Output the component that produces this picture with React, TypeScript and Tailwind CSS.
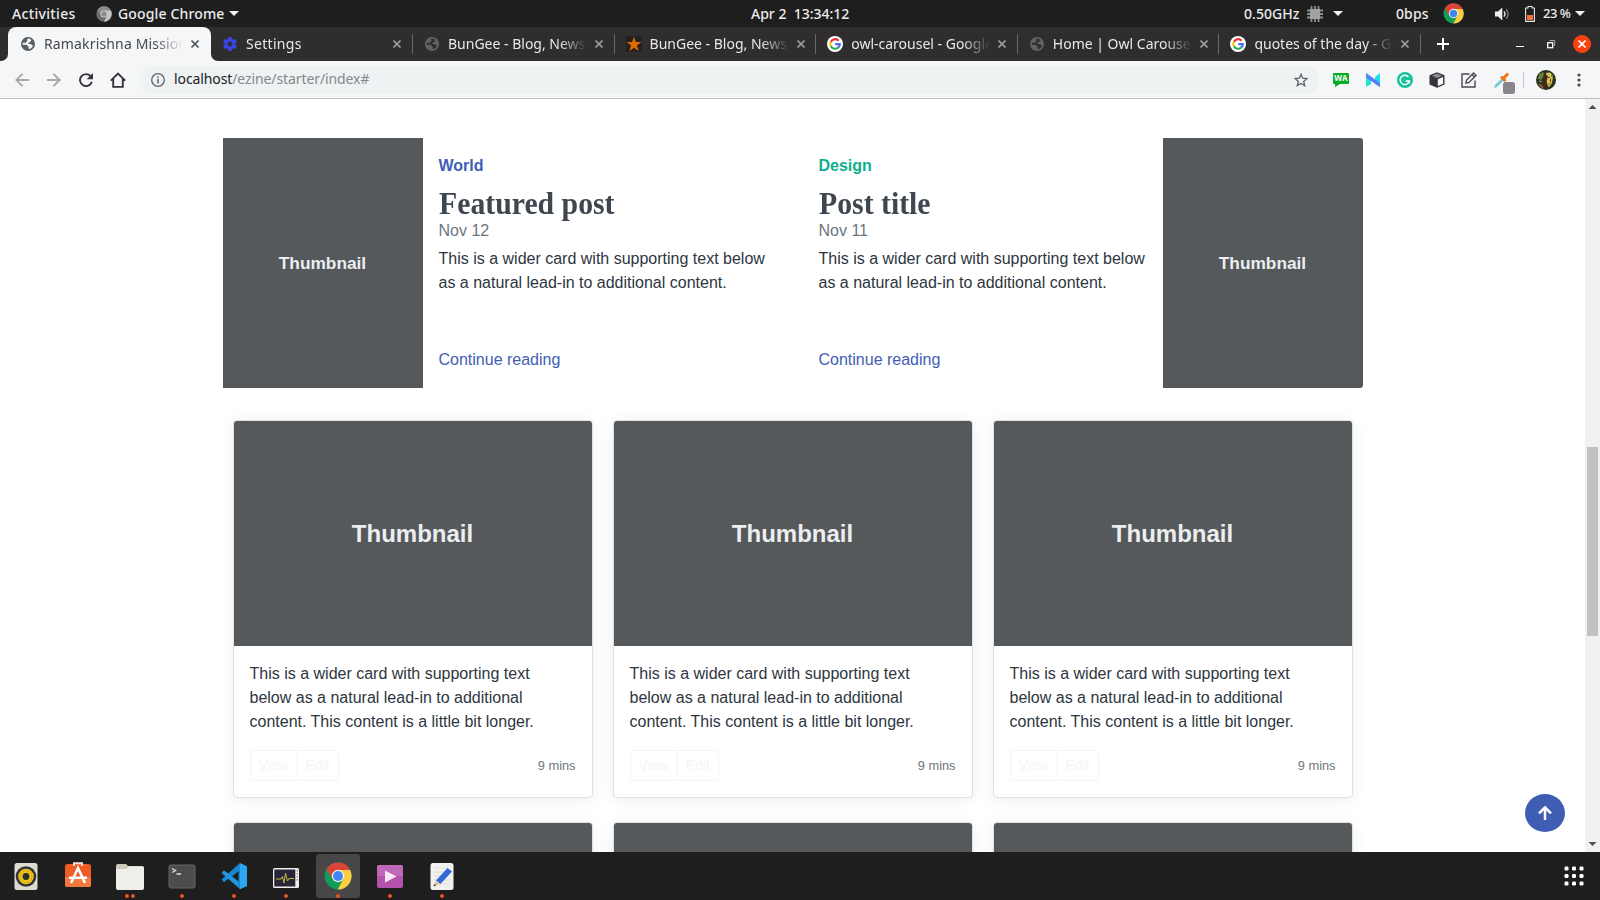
import React from "react";

const UI = "font-['Noto_Sans',sans-serif]";

function Chrome({ size, mono = false }: { size: number; mono?: boolean }) {
  const [r, g, y, b, w] = mono
    ? ["#8a8a8a", "#6c6c6c", "#c4c4c4", "#8c8c8c", "#d8d8d8"]
    : ["#db4437", "#0f9d58", "#ffcd40", "#4285f4", "#f1f1f1"];
  return (
    <svg width={size} height={size} viewBox="0 0 48 48" className="shrink-0">
      <circle cx="24" cy="24" r="23" fill={g} />
      <path d="M24 24 L4.1 12.5 A23 23 0 0 1 44.8 13.5 L24 13.5 Z" fill={r} />
      <path d="M4.1 12.5 L14.8 29.3 L24 24 L24 13.5 Z" fill={r} />
      <path d="M24 13.5 H44.8 A23 23 0 0 1 23.5 47 L33.2 29.3 Z" fill={y} />
      <circle cx="24" cy="24" r="10.6" fill={w} />
      <circle cx="24" cy="24" r="8.4" fill={b} />
    </svg>
  );
}

function Globe({ color, land }: { color: string; land: string }) {
  return (
    <svg width="14" height="14" viewBox="0 0 14 14" className="shrink-0">
      <circle cx="7" cy="7" r="7" fill={color} />
      <path d="M7.8 1.6 C5.8 2 5.6 3.2 6.6 3.9 C5.2 4.2 5.6 5.4 4.6 5.8 H1.8 C1.6 6.6 1.6 7.2 1.8 7.8 H5.2 C6.6 7.8 6.3 9.3 7.6 9.4 V11.9 C9.6 12 11.6 10.4 12 8.5 C10.8 8.7 10.6 7.2 9.2 7 H7 C6.8 5.6 8.6 5.9 8.9 5 C9.2 4 10.4 4.3 10.3 3 C9.6 2.2 8.7 1.8 7.8 1.6Z" fill={land} />
    </svg>
  );
}

function GoogleG() {
  return (
    <svg width="16" height="16" viewBox="0 0 16 16" className="shrink-0">
      <circle cx="8" cy="8" r="8" fill="#fff" />
      <g fill="none" strokeWidth="2.1">
        <path d="M11.6 4.7 A4.7 4.7 0 0 0 3.9 5.8" stroke="#ea2b2b" />
        <path d="M3.9 5.8 A4.7 4.7 0 0 0 3.9 10.3" stroke="#fbbc05" />
        <path d="M3.9 10.3 A4.7 4.7 0 0 0 11.2 11.5" stroke="#20b04b" />
        <path d="M11.2 11.5 A4.7 4.7 0 0 0 12.8 8.1 H8.2" stroke="#4472f2" />
      </g>
    </svg>
  );
}

function Gear() {
  return (
    <svg width="14" height="14" viewBox="2 2 20 20" className="shrink-0">
      <path fill="#3c46e6" d="M19.43 12.98c.04-.32.07-.64.07-.98s-.03-.66-.07-.98l2.11-1.65c.19-.15.24-.42.12-.64l-2-3.46c-.12-.22-.39-.3-.61-.22l-2.49 1c-.52-.4-1.08-.73-1.69-.98l-.38-2.65C14.46 2.18 14.25 2 14 2h-4c-.25 0-.46.18-.49.42l-.38 2.65c-.61.25-1.17.59-1.69.98l-2.49-1c-.23-.09-.49 0-.61.22l-2 3.46c-.13.22-.07.49.12.64l2.11 1.65c-.04.32-.07.65-.07.98s.03.66.07.98l-2.11 1.65c-.19.15-.24.42-.12.64l2 3.46c.12.22.39.3.61.22l2.49-1c.52.4 1.08.73 1.69.98l.38 2.65c.03.24.24.42.49.42h4c.25 0 .46-.18.49-.42l.38-2.65c.61-.25 1.17-.59 1.69-.98l2.49 1c.23.09.49 0 .61-.22l2-3.46c.12-.22.07-.49-.12-.64l-2.11-1.65zM12 15.5c-1.93 0-3.5-1.57-3.5-3.5s1.57-3.5 3.5-3.5 3.5 1.57 3.5 3.5-1.57 3.5-3.5 3.5z" />
    </svg>
  );
}

function StarTile() {
  return (
    <svg width="16" height="16" viewBox="0 0 16 16" className="shrink-0">
      <rect width="16" height="16" fill="#222" />
      <path d="M8 .8 L9.9 6 H15.4 L11 9.4 L12.7 15 L8 11.7 L3.3 15 L5 9.4 L.6 6 H6.1Z" fill="#de6a00" />
    </svg>
  );
}

function Close({ color }: { color: string }) {
  return (
    <svg width="8" height="8" viewBox="0 0 8 8" className="shrink-0">
      <path d="M.5 .5 L7.5 7.5 M7.5 .5 L.5 7.5" stroke={color} strokeWidth="1.6" />
    </svg>
  );
}

function Caret() {
  return (
    <svg width="10" height="5" viewBox="0 0 10 5" className="shrink-0">
      <path d="M0 0 H10 L5 5Z" fill="#f0f0f0" />
    </svg>
  );
}

function TopBar() {
  return (
    <header className={`flex h-[27px] shrink-0 items-center bg-[#1e1e1e] text-[14px] font-medium text-[#ececec] ${UI}`}>
      <div className="w-[96px] pl-3 tracking-[0.33px] whitespace-nowrap">Activities</div>
      <Chrome size={16} mono />
      <div className="ml-[6px] w-[111px] tracking-[0.15px] whitespace-nowrap">Google Chrome</div>
      <Caret />
      <div className="ml-[512px] w-[493px] tracking-[0px] whitespace-pre">Apr 2  13:34:12</div>
      <div className="w-[63px] tracking-[0.05px] whitespace-nowrap">0.50GHz</div>
      <svg width="16" height="16" viewBox="0 0 16 16" className="shrink-0">
        <path d="M0 4.5H16M0 8H16M0 11.5H16M4.5 0V16M8 0V16M11.5 0V16" stroke="#8c8c8c" strokeWidth="1.8" />
        <rect x="3" y="3" width="10" height="10" fill="#a2a2a2" />
      </svg>
      <div className="ml-[10px] flex w-[63px]"><Caret /></div>
      <div className="w-[47px] tracking-[0.1px]">0bps</div>
      <Chrome size={21} />
      <svg width="16" height="14" viewBox="0 0 16 14" className="ml-[31px] shrink-0">
        <path d="M0 4.5H3L7.3 .6V13.4L3 9.5H0Z" fill="#eee" />
        <path d="M9 4.4Q11 7 9 9.6" stroke="#ddd" strokeWidth="1.4" fill="none" />
        <path d="M11.2 2.2Q15 7 11.2 11.8" stroke="#777" strokeWidth="1.4" fill="none" />
      </svg>
      <svg width="10" height="16" viewBox="0 0 10 16" className="ml-[14px] shrink-0">
        <path d="M3 .5H7V2H9.4V15.4H.6V2H3Z" stroke="#e6e6e6" strokeWidth="1.1" fill="none" />
        <rect x="2" y="9" width="6" height="5" fill="#f2703c" />
      </svg>
      <div className="ml-2 w-[32px] text-[13px] tracking-[-0.5px] whitespace-pre">23 %</div>
      <Caret />
    </header>
  );
}

const tabs = [
  { title: "Settings", icon: <Gear />, track: "tracking-[0.3px]" },
  { title: "BunGee - Blog, News", icon: <Globe color="#5f6368" land="#302d2e" />, track: "tracking-[0px]" },
  { title: "BunGee - Blog, News", icon: <StarTile />, track: "tracking-[0px]" },
  { title: "owl-carousel - Google", icon: <GoogleG />, track: "tracking-[0px]" },
  { title: "Home | Owl Carousel", icon: <Globe color="#5f6368" land="#302d2e" />, track: "tracking-[0px]" },
  { title: "quotes of the day - Go", icon: <GoogleG />, track: "tracking-[0px]" },
];

function TabStrip() {
  return (
    <div className={`flex h-[34px] shrink-0 bg-[#302d2e] text-[14px] text-[#e8e8e8] ${UI}`}>
      <div className="w-2 bg-[#f5f6f7]"><div className="h-full rounded-br-[7px] bg-[#302d2e]" /></div>
      <div className="flex w-[203px] shrink-0 items-center rounded-t-[8px] bg-[#f5f6f7] pl-[13px] text-[#45484c]">
        <Globe color="#5a5e63" land="#f5f6f7" />
        <div className="ml-[9px] w-[139px] overflow-hidden pb-[2px] tracking-[0.15px] whitespace-nowrap [mask-image:linear-gradient(to_right,black_80%,transparent)]">
          Ramakrishna Mission
        </div>
        <div className="ml-2 flex"><Close color="#55585c" /></div>
      </div>
      <div className="w-2 bg-[#f5f6f7]"><div className="h-full rounded-bl-[7px] bg-[#302d2e]" /></div>
      {tabs.map((t, i) => (
        <div key={i} className={`flex shrink-0 items-center ${i === 0 ? "w-[194px] pl-[3px]" : "w-[201.6px] pl-[11px]"}`}>
          <div className="flex w-4 justify-center">{t.icon}</div>
          <div className={`ml-2 w-[139px] overflow-hidden pb-[2px] whitespace-nowrap [mask-image:linear-gradient(to_right,black_80%,transparent)] ${t.track}`}>
            {t.title}
          </div>
          <div className="ml-2 flex"><Close color="#9d9c9d" /></div>
          <div className="mr-0 ml-auto h-5 w-px bg-[#68686a]" />
        </div>
      ))}
      <svg width="12" height="12" viewBox="0 0 12 12" className="mt-[11px] ml-[16px] shrink-0">
        <path d="M6 0V12M0 6H12" stroke="#fff" strokeWidth="2" />
      </svg>
      <div className="mt-[19px] ml-[67px] h-px w-2 bg-white" />
      <svg width="9" height="9" viewBox="0 0 9 9" className="mt-[13px] ml-[23px] shrink-0">
        <rect x=".7" y="2.7" width="5" height="5" fill="none" stroke="#fff" strokeWidth="1.3" />
        <path d="M2.5 .5H7.7V6" stroke="#aaa" fill="none" />
      </svg>
      <div className="mt-2 ml-[17px] flex h-[18px] w-[18px] items-center justify-center rounded-full bg-[#fb420d]">
        <Close color="#fff" />
      </div>
    </div>
  );
}

function Toolbar() {
  return (
    <div className="flex h-[38px] shrink-0 items-center border-b border-[#b9bfc8] bg-[#f5f6f7]">
      <svg width="14" height="14" viewBox="0 0 14 14" className="ml-[15px] shrink-0" fill="none" stroke="#a6a8aa" strokeWidth="1.8">
        <path d="M14 7H1.5M7.5 .8L1.3 7L7.5 13.2" />
      </svg>
      <svg width="14" height="14" viewBox="0 0 14 14" className="ml-[18px] shrink-0" fill="none" stroke="#a6a8aa" strokeWidth="1.8">
        <path d="M0 7H12.5M6.5 .8L12.7 7L6.5 13.2" />
      </svg>
      <svg width="14" height="14" viewBox="0 0 14 14" className="ml-[18px] shrink-0">
        <path d="M11.6 3.2A6 6 0 1 0 12.8 8.8" fill="none" stroke="#333538" strokeWidth="1.9" />
        <path d="M14 0V6.3H7.7Z" fill="#333538" />
      </svg>
      <svg width="16" height="16" viewBox="0 0 16 16" className="ml-[17px] shrink-0" fill="none" stroke="#333538" strokeWidth="1.9">
        <path d="M.8 8.7L8 1.5L15.2 8.7M3.2 7V14.9H12.8V7" />
      </svg>
      <div className="ml-[14px] flex h-7 w-[1179px] shrink-0 items-center rounded-full bg-[#eef2f3] pr-[11px] pl-[11px]">
        <svg width="14" height="14" viewBox="0 0 14 14" className="shrink-0">
          <circle cx="7" cy="7" r="6.3" fill="none" stroke="#5f6368" strokeWidth="1.3" />
          <path d="M7 6V10.4M7 3.4V4.9" stroke="#5f6368" strokeWidth="1.5" />
        </svg>
        <div className={`ml-[9px] flex-1 pb-[2px] text-[14px] tracking-[-0.1px] text-[#85898d] ${UI}`}>
          <span className="text-[#202124]">localhost</span>/ezine/starter/index#
        </div>
        <svg width="14" height="14" viewBox="0 0 14 14" fill="none" stroke="#5f6368" strokeWidth="1.3">
          <path d="M7 1.3L8.7 5.2L12.9 5.6L9.7 8.4L10.7 12.6L7 10.4L3.3 12.6L4.3 8.4L1.1 5.6L5.3 5.2Z" />
        </svg>
      </div>
      <div className="ml-[14px] flex h-[14px] w-4 flex-col">
        <div className="flex h-[11px] items-center justify-center rounded-[1px] bg-[#09ab20] font-['Open_Sans',sans-serif] text-[8px] font-bold text-white">WA</div>
        <svg width="6" height="3" viewBox="0 0 6 3" className="ml-[2px]"><path d="M0 0H5L0 3Z" fill="#09ab20" /></svg>
      </div>
      <svg width="14" height="14" viewBox="0 0 14 14" className="ml-[17px] shrink-0">
        <path d="M9 4L14 0V14L9 11Z" fill="#1ce0f0" />
        <path d="M0 0L5 4V11L0 14Z" fill="#22e3d2" />
        <path d="M0 0L14 10V14L0 4.5Z" fill="#5b7df5" />
      </svg>
      <svg width="16" height="16" viewBox="0 0 16 16" className="ml-[17px] shrink-0">
        <circle cx="8" cy="8" r="8" fill="#15c39a" />
        <path d="M11.5 5A4.7 4.7 0 1 0 12.4 9H8.8M12.4 8.2V11.4" fill="none" stroke="#fff" strokeWidth="1.4" />
      </svg>
      <svg width="16" height="16" viewBox="0 0 16 16" className="ml-[16px] shrink-0">
        <path d="M8 .3L15.500 3.2V12.6L8 15.8L.5 12.6V3.2Z" fill="#333539" />
        <path d="M8 1.6L13.200 3.800L8 6L2.800 3.800Z" fill="#8b8d90" />
        <path d="M8.8 7.3L14.100 5V11.700L8.8 14.1Z" fill="#f5f6f7" />
      </svg>
      <svg width="16" height="16" viewBox="0 0 16 16" className="ml-[16px] shrink-0" fill="none" stroke="#47494d" strokeWidth="1.4">
        <path d="M8.5 2H1V15H14V8.5" /><path d="M5 11L5.6 8L12.6 1L15 3.4L8 10.4Z" /><path d="M11 2.6L13.4 5" />
      </svg>
      <svg width="23" height="22" viewBox="0 0 23 22" className="mt-[6px] ml-[16px] shrink-0">
        <path d="M1 16L2 13L9 6L11 8L4 15Z" fill="#7cc9dc" />
        <path d="M8 4.5L12.5 9M9.5 7.5L15 1.5" stroke="#f07618" strokeWidth="3" />
        <rect x="10" y="10" width="12" height="12" rx="2.5" fill="#8b858b" />
      </svg>
      <div className="ml-[7px] h-4 w-px bg-[#c3c6ca]" />
      <svg width="20" height="20" viewBox="0 0 20 20" className="ml-[12px] shrink-0">
        <circle cx="10" cy="10" r="10" fill="#28331f" />
        <path d="M3 4L7 2L9 5L5 10L2 9Z" fill="#64813f" />
        <path d="M10 3Q16 1 17 7L16 13Q14 17 12 17L10 11Z" fill="#d6c455" />
        <path d="M8 3L12 6L10.500 12L12.500 18L7 19L6 12Z" fill="#40291c" />
        <path d="M12 7.500H14M14.500 9V12M12.500 14H14.500M16 4V7" stroke="#4a4a1f" />
        <path d="M2 13L6 15L8 19Q4 18 2 13Z" fill="#8f5a32" />
        <path d="M3 11L6 11.500" stroke="#7fb08a" />
      </svg>
      <svg width="4" height="14" viewBox="0 0 4 14" className="ml-[21px] shrink-0" fill="#47494d">
        <circle cx="2" cy="2" r="1.6" /><circle cx="2" cy="7" r="1.6" /><circle cx="2" cy="12" r="1.6" />
      </svg>
    </div>
  );
}

function PostText({ tag, tagClass, title, date }: { tag: string; tagClass: string; title: string; date: string }) {
  return (
    <div className="flex w-[360px] shrink-0 flex-col items-start p-4 text-[16px] leading-6 text-[#2e3640]">
      <strong className={`mb-2 font-bold ${tagClass}`}>{tag}</strong>
      <h3 className="h-[33px] origin-left scale-x-[0.93] font-['Liberation_Serif',serif] text-[32px] leading-[34px] font-bold whitespace-nowrap text-[#3e4650]">{title}</h3>
      <div className="mb-1 text-[#6c757d]">{date}</div>
      <p>This is a wider card with supporting text below as a natural lead-in to additional content.</p>
      <a className="mt-auto text-[#3f5eb5]">Continue reading</a>
    </div>
  );
}

function Thumb({ className, label = "Thumbnail" }: { className: string; label?: string }) {
  return (
    <div className={`flex items-center justify-center bg-[#55595c] font-bold text-[#eceeef] ${className}`}>{label}</div>
  );
}

const cardFrame = "w-[360px] rounded-[4px] border border-[#dfe0e1] bg-white shadow-[0_2px_16px_rgba(0,0,0,0.07)]";

function Card() {
  return (
    <article className={cardFrame}>
      <Thumb className="h-[225px] rounded-t-[3px] text-[24px]" />
      <div className="p-4">
        <p className="mb-4 text-[16px] leading-6 text-[#2e3640]">
          This is a wider card with supporting text below as a natural lead-in to additional content. This content is a little bit longer.
        </p>
        <div className="flex items-center justify-between">
          <div className="flex h-[31px] rounded-[3px] border border-[#f4f5f6] text-[14px] leading-[29px] text-[#f4f5f6]">
            <span className="border-r border-[#f4f5f6] px-2">View</span>
            <span className="px-2">Edit</span>
          </div>
          <small className="text-[12.8px] text-[#6c757d]">9 mins</small>
        </div>
      </div>
    </article>
  );
}

function Page() {
  return (
    <div className="relative flex h-[753px] shrink-0 overflow-hidden bg-white font-['Liberation_Sans',sans-serif]">
      <main className="h-[1100px] w-[1585px] shrink-0 pt-[39px]">
        <div className="ml-[222.5px] flex h-[250px] w-[1140px] gap-5">
          <div className="flex w-[560px]">
            <Thumb className="w-[200px] pt-[2px] text-[17.3px]" />
            <PostText tag="World" tagClass="text-[#3f5eb5]" title="Featured post" date="Nov 12" />
          </div>
          <div className="flex w-[560px]">
            <PostText tag="Design" tagClass="text-[#0fae8e]" title="Post title" date="Nov 11" />
            <Thumb className="w-[200px] rounded-r-[3px] pt-[2px] text-[17.3px]" />
          </div>
        </div>
        <div className="mt-8 ml-[232.5px] grid w-[1120px] grid-cols-3 gap-x-5 gap-y-6">
          {[0, 1, 2].map((n) => <Card key={n} />)}
          {[3, 4, 5].map((n) => (
            <article key={n} className={cardFrame}>
              <Thumb className="h-[225px] rounded-t-[3px]" label="" />
            </article>
          ))}
        </div>
      </main>
      <div className="flex w-[15px] flex-col items-center bg-[#f1f1f1]">
        <svg width="15" height="15" viewBox="0 0 15 15"><path d="M3.500 10H11.500L7.500 6Z" fill="#505050" /></svg>
        <div className="mt-[333px] h-[189px] w-[11px] bg-[#c1c1c1]" />
        <svg width="15" height="15" viewBox="0 0 15 15" className="mt-auto"><path d="M3.500 5H11.500L7.500 9Z" fill="#505050" /></svg>
      </div>
      <button className="absolute right-[35px] bottom-[20px] flex h-[38px] w-10 items-center justify-center rounded-[50%] bg-[#3f5db3]">
        <svg width="14" height="14" viewBox="0 0 14 14" fill="none" stroke="#fff" strokeWidth="2.5">
          <path d="M7 14V1.500M1 7.300L7 1.300L13 7.300" />
        </svg>
      </button>
    </div>
  );
}

const apps: { dots: number; active?: boolean; icon: React.ReactNode }[] = [
  { dots: 0, icon: (<><rect x="2.500" y="1" width="23" height="27" rx="2.500" fill="#dedbd2" /><circle cx="14" cy="14.500" r="10.300" fill="#33343a" /><circle cx="14" cy="14.500" r="7.800" fill="#f0c419" /><circle cx="14" cy="14.500" r="6" fill="none" stroke="#d8a910" /><circle cx="14" cy="14.500" r="3.400" fill="#2c2d33" /></>) },
  { dots: 0, icon: (<><rect x="1" y="2" width="26" height="23" rx="2.500" fill="#ef5b25" /><path d="M1 15H27V22.500A2.500 2.500 0 0 1 24.500 25H3.500A2.500 2.500 0 0 1 1 22.500Z" fill="#f4793f" /><path d="M10 4V1.200H18V4" stroke="#f6dfd3" strokeWidth="2" fill="none" /><path d="M7.500 20L14 6L20.500 20M6 15.800H22" stroke="#fff" strokeWidth="2.600" strokeLinecap="round" fill="none" /></>) },
  { dots: 2, icon: (<><path d="M0 4Q0 2 2 2H10L12 4H26Q28 4 28 6V12H0Z" fill="#cfc8bc" /><path d="M0 7H10L13 4.500H26.500Q28 4.500 28 6V26Q28 28 26 28H2Q0 28 0 26Z" fill="#efeeeb" /></>) },
  { dots: 1, icon: (<><rect x="1" y="3" width="26" height="23" rx="2" fill="#4c4c4c" stroke="#666" /><path d="M4 6.500L7.500 8.500L4 10.500M8.500 12H13" stroke="#dedede" strokeWidth="1.400" fill="none" /></>) },
  { dots: 1, icon: (<><path d="M20 1L1.500 17.500L4 20.300L20 8.200Z" fill="#1a86cf" /><path d="M20 27L1.500 11L4 8.300L20 20.500Z" fill="#2196dd" /><path d="M20 1L27 4.300V24L20 27.200Z" fill="#2ca7f2" /><path d="M20 1L18.500 4V24.500L20 27.200V20.500Z" fill="#1a86cf" /></>) },
  { dots: 1, icon: (<><rect x="1" y="6" width="26" height="20" rx="1.500" fill="#eeede9" /><rect x="2.300" y="7.500" width="21" height="17" fill="#28243a" /><path d="M4 17H9L10.500 14.500L12 21L13.500 11L15.500 19L17 16.500H22" stroke="#c9b83a" fill="none" /><path d="M25.200 8V20" stroke="#777" strokeDasharray="1.500 1.500" /></>) },
  { dots: 1, active: true, icon: <Chrome size={28} /> },
  { dots: 1, icon: (<><rect x="1" y="3" width="26" height="23" rx="2" fill="#b353ad" /><path d="M1 14V5Q1 3 3 3H25Q27 3 27 5V14Z" fill="#bf67b8" /><path d="M9 8.500L20.500 14.500L9 20.500Z" fill="#f7e6f5" /></>) },
  { dots: 1, icon: (<><rect x="2.500" y="1" width="23" height="27" rx="2.500" fill="#f1f1ef" /><path d="M6 6H20M6 10H18M6 14H14M6 18H22M6 22H22" stroke="#dadada" /><path d="M8 18.500L19.500 6L24 9.500L12.500 22Z" fill="#2f68d8" /><path d="M8 18.500L5.500 24.300L12.500 22Z" fill="#e6c59b" /><path d="M5.500 24.300L6.500 21.900L8.300 23.400Z" fill="#333" /></>) },
];

function Dock() {
  return (
    <nav className="flex h-12 shrink-0 items-center bg-[#1e1e1e] pl-1">
      {apps.map((a, i) => (
        <div key={i} className={`mr-2 flex h-11 w-11 flex-col items-center rounded-[3px] pt-2 ${a.active ? "bg-[#474747]" : ""}`}>
          <svg width="28" height="28" viewBox="0 0 28 28" overflow="visible">{a.icon}</svg>
          <div className="mt-1 flex gap-[2px]">
            {Array.from({ length: a.dots }, (_, d) => <div key={d} className="h-1 w-1 rounded-full bg-[#e95420]" />)}
          </div>
        </div>
      ))}
      <svg width="20" height="20" viewBox="0 0 20 20" className="mr-4 ml-auto" fill="#fff">
        {Array.from({ length: 9 }, (_, n) => (
          <rect key={n} x={(n % 3) * 7.5 + 0.5} y={Math.floor(n / 3) * 7.5 + 0.5} width="4" height="4" rx="1.2" />
        ))}
      </svg>
    </nav>
  );
}

export default function App() {
  return (
    <div className="flex h-[900px] w-[1600px] flex-col overflow-hidden">
      <TopBar />
      <TabStrip />
      <Toolbar />
      <Page />
      <Dock />
    </div>
  );
}
